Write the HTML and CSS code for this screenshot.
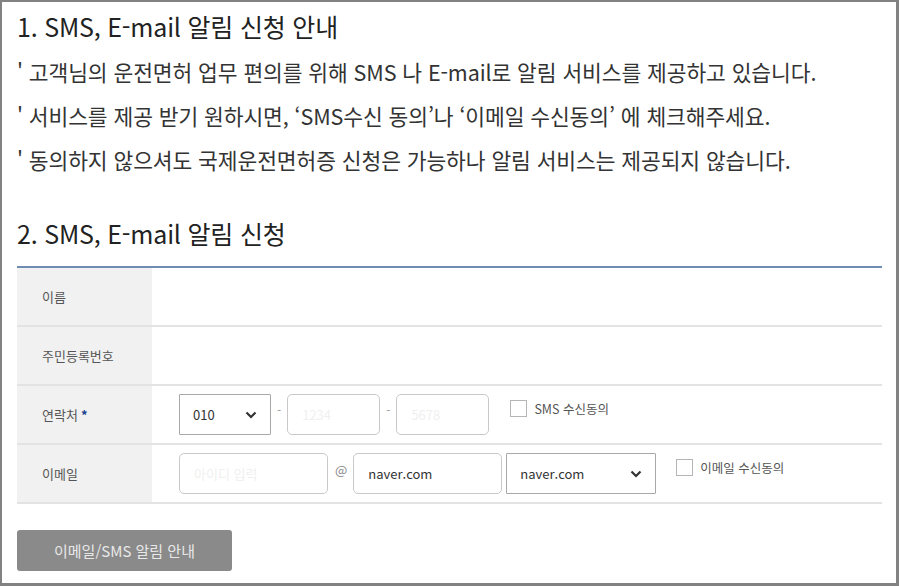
FILE: index.html
```html
<!DOCTYPE html>
<html lang="ko">
<head>
<meta charset="utf-8">
<title>SMS, E-mail 알림 신청</title>
<link rel="stylesheet" href="styles.css">
</head>
<body>
<div class="frame">
  <h2 class="title first">1. SMS, E-mail 알림 신청 안내</h2>
  <p class="note">' 고객님의 운전면허 업무 편의를 위해 SMS 나 E-mail로 알림 서비스를 제공하고 있습니다.</p>
  <p class="note">' 서비스를 제공 받기 원하시면, ‘SMS수신 동의’나 ‘이메일 수신동의’ 에 체크해주세요.</p>
  <p class="note">' 동의하지 않으셔도 국제운전면허증 신청은 가능하나 알림 서비스는 제공되지 않습니다.</p>

  <h2 class="title second">2. SMS, E-mail 알림 신청</h2>
  <div class="form">
    <div class="row">
      <div class="label">이름</div>
      <div class="field"></div>
    </div>
    <div class="row">
      <div class="label">주민등록번호</div>
      <div class="field"></div>
    </div>
    <div class="row">
      <div class="label">연락처 <span class="req">*</span></div>
      <div class="field">
        <div class="select sel-phone"><span>010</span>
          <svg class="chev" width="12" height="8" viewBox="0 0 12 8"><path d="M1.5 1.5 L6 6 L10.5 1.5" fill="none" stroke="#333" stroke-width="2.2"/></svg>
        </div>
        <span class="dash">-</span>
        <input class="inp inp-phone" type="text" placeholder="1234">
        <span class="dash">-</span>
        <input class="inp inp-phone" type="text" placeholder="5678">
        <label class="agree"><input type="checkbox" class="box"><span>SMS 수신동의</span></label>
      </div>
    </div>
    <div class="row">
      <div class="label">이메일</div>
      <div class="field">
        <input class="inp inp-mail" type="text" placeholder="아이디 입력">
        <span class="at">@</span>
        <input class="inp inp-mail" type="text" value="naver.com">
        <div class="select sel-mail"><span>naver.com</span>
          <svg class="chev" width="12" height="8" viewBox="0 0 12 8"><path d="M1.5 1.5 L6 6 L10.5 1.5" fill="none" stroke="#333" stroke-width="2.2"/></svg>
        </div>
        <label class="agree agree-mail"><input type="checkbox" class="box"><span>이메일 수신동의</span></label>
      </div>
    </div>
  </div>
  <button class="btn" type="button">이메일/SMS 알림 안내</button>
</div>
</body>
</html>
```
FILE: styles.css
```css
* { box-sizing: border-box; }
html, body { margin: 0; padding: 0; background: #fff; }
body {
  font-family: "Noto Sans CJK KR", "Noto Sans", sans-serif;
  color: #333;
}
.frame {
  width: 899px;
  height: 586px;
  border-style: solid;
  border-color: #828282;
  border-width: 2px 3px 3px 2px;
  padding: 7px 14px 0 15px;
  overflow: hidden;
}
.title {
  margin: 0;
  font-size: 25px;
  font-weight: 400;
  line-height: 34px;
  color: #222;
  letter-spacing: -0.2px;
}
.title.first { margin-bottom: 7px; }
.title.second { margin-top: 34px; margin-bottom: 16px; }
.note {
  margin: 0;
  font-size: 21.5px;
  line-height: 44px;
  color: #333;
  letter-spacing: -0.1px;
}
.form {
  border-top: 2px solid #6f8db2;
  width: 865px;
}
.row {
  display: flex;
  height: 59px;
  border-bottom: 2px solid #e3e3e3;
}
.label {
  width: 135px;
  flex: none;
  background: #f1f1f1;
  display: flex;
  align-items: center;
  padding-left: 25px;
  font-size: 13px;
  color: #555;
}
.req { color: #1c3f8f; margin-left: 3px; font-weight: 700; }
.field {
  flex: 1;
  display: flex;
  align-items: center;
  padding-left: 27px;
}
.select {
  height: 41px;
  border: 1px solid #a8a8a8;
  border-radius: 1px;
  display: flex;
  align-items: center;
  justify-content: space-between;
  padding: 0 13px 0 13px;
  font-size: 13px;
  color: #333;
  background: #fff;
}
.sel-phone { width: 92px; }
.sel-mail { width: 150px; margin-left: 4px; }
.inp {
  height: 41px;
  border: 1px solid #c9c9c9;
  border-radius: 5px;
  padding: 0 14px;
  font-family: "Noto Sans CJK KR", "Noto Sans", sans-serif;
  font-size: 13px;
  color: #333;
  background: #fff;
  outline: none;
}
.inp::placeholder { color: #f0f0f0; }
.inp-phone { width: 93px; }
.inp-mail { width: 149px; }
.dash {
  font-size: 12px;
  color: #999;
  margin: 0 6px 10px 6px;
}
.at {
  font-size: 13px;
  color: #888;
  margin: 0 6px 8px 7px;
}
.agree {
  display: flex;
  align-items: center;
  gap: 7px;
  margin-left: 21px;
  margin-bottom: 13px;
  font-size: 12.5px;
  color: #555;
}
.agree-mail { margin-left: 20px; }
.box {
  appearance: none;
  -webkit-appearance: none;
  width: 17px;
  height: 17px;
  margin: 0;
  border: 1px solid #b5b5b5;
  background: #fff;
}
.btn {
  margin-top: 26px;
  width: 215px;
  height: 41px;
  border: none;
  border-radius: 3px;
  background: #8a8a8a;
  color: #e8e8e8;
  font-family: "Noto Sans CJK KR", "Noto Sans", sans-serif;
  font-size: 15px;
  padding: 0;
}
```
